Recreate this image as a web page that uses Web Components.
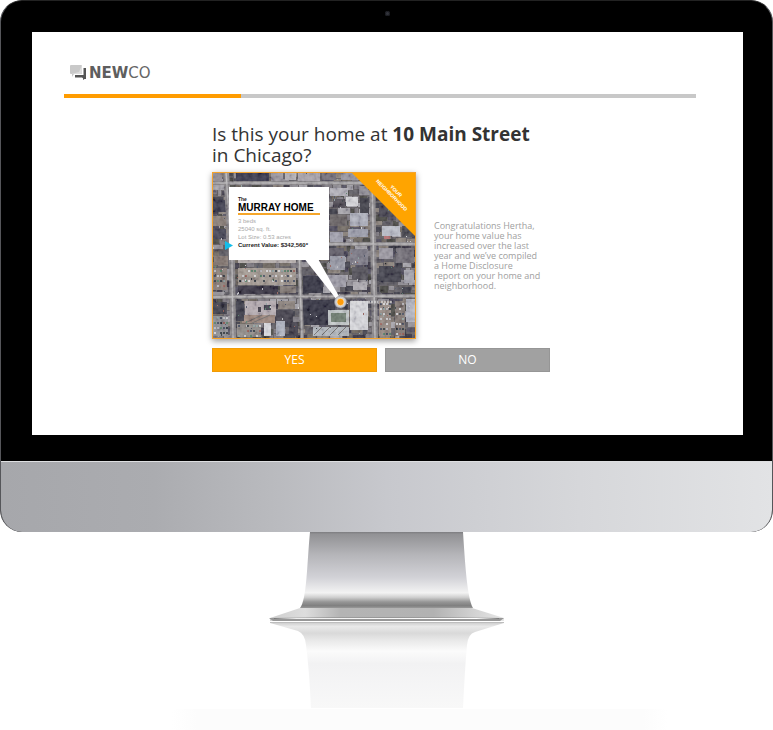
<!DOCTYPE html>
<html lang="en">
<head>
<meta charset="utf-8">
<meta name="viewport" content="width=device-width, initial-scale=1">
<title>NewCo home check</title>
<style>
body { margin: 0; background: #fff; color: #333; font-family: "Open Sans", "Noto Sans", sans-serif; }
</style>
</head>
<body>
<desktop-monitor>
  <app-header></app-header>
  <step-progress value="28"></step-progress>
  <home-question>
    <span slot="title">Is this your home at <b>10 Main Street</b><br>in Chicago?</span>
    <aerial-photo slot="media"></aerial-photo>
    <span slot="note">Congratulations Hertha,<br>your home value has<br>increased over the last<br>year and we’ve compiled<br>a Home Disclosure<br>report on your home and<br>neighborhood.</span>
    <choice-button slot="actions">YES</choice-button>
    <choice-button slot="actions" tone="muted">NO</choice-button>
  </home-question>
</desktop-monitor>

<script>
const define = (name, html, setup) => customElements.define(name, class extends HTMLElement {
  connectedCallback() {
    if (this.shadowRoot) return;
    this.attachShadow({ mode: 'open' }).innerHTML = html;
    if (setup) setup(this, this.shadowRoot);
  }
});

define('monitor-stand', `
<style>:host{display:block} svg{display:block;width:100%;height:auto}</style>
<svg viewBox="0 0 773 198" aria-hidden="true">
  <defs>
    <linearGradient id="neck" x1="0" y1="0" x2="0" y2="1">
      <stop offset="0" stop-color="#7d7d80"/><stop offset=".03" stop-color="#929295"/><stop offset=".3" stop-color="#b5b5b9"/>
      <stop offset=".6" stop-color="#d2d2d7"/><stop offset=".8" stop-color="#f3f3f3"/><stop offset=".86" stop-color="#cfcfcf"/>
      <stop offset=".92" stop-color="#969696"/><stop offset=".97" stop-color="#7f7f7f"/><stop offset="1" stop-color="#999"/>
    </linearGradient>
    <linearGradient id="foot" x1="0" y1="0" x2="1" y2="0">
      <stop offset="0" stop-color="#cfcfcf"/><stop offset=".15" stop-color="#ddd"/><stop offset=".3" stop-color="#b4b4b4"/>
      <stop offset=".7" stop-color="#b2b2b2"/><stop offset=".87" stop-color="#d2d2d2"/><stop offset="1" stop-color="#e6e6e6"/>
    </linearGradient>
    <linearGradient id="edge" x1="0" y1="0" x2="1" y2="0">
      <stop offset="0" stop-color="#777"/><stop offset=".1" stop-color="#eee"/><stop offset=".9" stop-color="#fff"/><stop offset="1" stop-color="#777"/>
    </linearGradient>
    <linearGradient id="mirror" x1="0" y1="0" x2="0" y2="1">
      <stop offset="0" stop-color="#d0d0d0"/><stop offset=".04" stop-color="#e9e9e9"/><stop offset=".12" stop-color="#d9d9d9"/><stop offset=".2" stop-color="#e8e8e8"/>
      <stop offset=".33" stop-color="#fbfbfb"/><stop offset=".48" stop-color="#f2f2f3"/><stop offset="1" stop-color="#f8f8f8"/>
    </linearGradient>
    <linearGradient id="floor" x1="0" y1="0" x2="1" y2="0">
      <stop offset="0" stop-color="#fff"/><stop offset=".05" stop-color="#fcfcfc"/><stop offset=".95" stop-color="#fcfcfc"/><stop offset="1" stop-color="#fff"/>
    </linearGradient>
  </defs>
  <path d="M172 177H668V198H172Z" fill="url(#floor)"/>
  <path d="M270 91H504L475 100Q468 102 467 113Q465 135 463 176H311Q309 135 306 113Q305 102 298 99Z" fill="url(#mirror)"/>
  <path d="M270 86L300 76H472L504 86V89H270Z" fill="url(#foot)"/>
  <path d="M310 0H463C465 30 467 65 473 76H300C307 68 307 30 310 0Z" fill="url(#neck)"/>
  <path d="M269 86Q387 84 504 86L500 89H273Z" fill="#979797"/>
  <path d="M274 86H499V87H274Z" fill="url(#edge)"/>
  <path d="M270 90H504V91H270Z" fill="#bdbdbd"/>
</svg>`);

define('desktop-monitor', `
<style>
:host{display:block}
.case{border-radius:22px;overflow:hidden;background:#000;border:1px solid #55565a;border-bottom:0;border-top-color:#222}
.bezel{padding:0 29px 26px 31px}
.cam{height:31px;display:grid;place-items:center}
.cam span{display:block;width:5px;height:5px;margin-bottom:6px;border-radius:50%;background:#33353d;box-shadow:inset 0 0 0 1px #1b1c21}
.screen{background:#fff;padding:33px 47px 63px 32px}
.chin{height:70px;margin:0 -1px;border-top:1px solid #dedfe1;background:linear-gradient(90deg,#a6a7ab 0%,#abacb0 20%,#b9babe 35%,#c7c8cd 50%,#d6d7da 75%,#e2e3e5 100%)}
</style>
<div class="case">
  <div class="bezel"><div class="cam"><span></span></div><main class="screen"><slot></slot></main></div>
  <div class="chin"></div>
</div>
<monitor-stand></monitor-stand>`);

define('app-header', `
<style>
:host{display:block}
a{display:flex;align-items:center;gap:2px;padding-left:5px;height:16px;color:#666;text-decoration:none;font:400 15px/16px "DejaVu Sans",sans-serif}
b{font-weight:700;color:#5e5e5e}
svg{width:18px;height:16px;flex:none}
</style>
<a href="#" aria-label="NEWCO home">
  <svg viewBox="0 0 18 16" aria-hidden="true">
    <path d="M14.500 3H17V14H15L13 12.500H6V10H14.500Z" fill="#555"/>
    <path d="M14 12V15L17 13Z" fill="#555"/>
    <path d="M2 0H12Q13 0 13 1V8Q13 9 12 9H5L3 12V9H2Q1 9 1 8V1Q1 0 2 0Z" fill="#c9c9c9"/>
    <path d="M13 0L10 7L2 9H12Q13 9 13 8Z" fill="#dedede"/>
  </svg>
  <span><b>NEW</b>CO</span>
</a>`);

define('step-progress', `
<style>
:host{display:block;margin-top:13px}
.track{height:4px;background:#c8c8c8}
.bar{height:100%;background:#ff9c00}
</style>
<div class="track" role="progressbar" aria-label="Progress" aria-valuemin="0" aria-valuemax="100"><div class="bar"></div></div>`,
(el, root) => {
  root.querySelector('.track').setAttribute('aria-valuenow', el.getAttribute('value'));
  root.querySelector('.bar').style.width = el.getAttribute('value') + '%';
});

define('home-question', `
<style>
:host{display:block;max-width:338px;margin:26px auto 0;padding-left:2px}
h1{margin:0;font-size:19px;line-height:21px;font-weight:400;color:#333}
.row{display:flex;align-items:center;gap:18px;margin-top:6px}
p{flex:1;margin:0;font-size:9px;line-height:10px;color:#a0a0a0}
.actions{display:grid;grid-template-columns:1fr 1fr;gap:8px;margin-top:9px}
</style>
<h1><slot name="title"></slot></h1>
<div class="row"><slot name="media"></slot><p><slot name="note"></slot></p></div>
<div class="actions"><slot name="actions"></slot></div>`);

define('choice-button', `
<style>
:host{display:block}
button{display:block;width:100%;height:24px;padding:0;border:1px solid #f09b05;background:#ffa400;color:#fff;font:400 12px/22px "Open Sans",sans-serif;cursor:pointer}
:host([tone=muted]) button{background:#a1a1a1;border-color:#969696}
</style>
<button type="button"><slot></slot></button>`);

define('aerial-photo', `
<style>
:host{display:block;flex:none;position:relative;width:204px;box-shadow:0 2px 6px #0006;font-family:"Liberation Sans",Arial,sans-serif}
svg{display:block;width:100%;height:auto}
.card{position:absolute;left:17px;top:15px;width:91px;height:65px;padding:8px 0 0 9px;color:#222;font-size:6px;line-height:8px;background:#fff}
.card div{color:#aaa}
.the{font-size:5px;line-height:8px;font-weight:700;display:block}
h2{margin:0;width:82px;font-size:10px;line-height:10px;border-bottom:2px solid #f5a62b;color:#000;margin-bottom:2px}
.card strong{display:block}
.marker{position:absolute;left:13px;top:69px;width:8px;height:9px;background:#14bdea;clip-path:polygon(0 0,100% 50%,0 100%)}
</style>
<svg viewBox="0 0 204 167" role="img" aria-label="Aerial view of the neighborhood">
  <defs>
    <filter id="soft" x="0" y="0" width="1" height="1"><feGaussianBlur stdDeviation=".6"/></filter>
    <filter id="grain" x="0" y="0" width="1" height="1">
      <feTurbulence type="fractalNoise" baseFrequency=".22" numOctaves="2" seed="4"/>
      <feColorMatrix values="1.4 0 0 0 -.3  1.4 0 0 0 -.31  1.4 0 0 0 -.27  0 0 0 0 .2"/>
    </filter>
  </defs>
  <rect width="204" height="167" fill="#575356"/>
  <g filter="url(#soft)">
    <g id="houses"></g>
    <g id="roofs"></g>
    <g id="cars"></g>
    <g fill="none" stroke="#858284" stroke-width="6">
      <path d="M14 0L20 90L21 167M160 0L163 167"/>
      <path stroke-width="4" d="M87 75L90 167M0 11H204M108 72H204M0 125L204 124"/>
      <path stroke="#b8b6b7" stroke-width="1.500" d="M14 0L20 90L21 167M87 75L90 167M160 0L163 167M0 11H204M108 72H204M0 125L204 124"/>
    </g>
  </g>
  <rect width="204" height="167" filter="url(#grain)"/>
  <path fill="#fff" d="M91 85L105 85L129 128L125 128Z"/>
  <circle cx="128.500" cy="130" r="6" fill="#c9cbd1" stroke="#8d8d94" stroke-width=".6"/>
  <circle cx="128.500" cy="130" r="3.700" fill="#ff9c0a" stroke="#f5ead6" stroke-width=".8"/>
  <path d="M139 130H153M156 130H166M169 130H181" stroke="#dedede" stroke-width="2.500" stroke-dasharray="2 1" opacity=".65"/>
  <path fill="#ffa400" d="M139 0H204V65Z"/>
  <g transform="translate(180 23) rotate(45)" fill="#fff" font-size="5" font-weight="700" text-anchor="middle">
    <text y="-4">YOUR</text><text y="2">NEIGHBORHOOD</text>
  </g>
  <rect x=".5" y=".5" width="203" height="166" fill="none" stroke="#f5a32c"/>
</svg>
<div class="card">
  <span class="the">The</span><h2>MURRAY HOME</h2>
  <div>3 beds</div><div>25040 sq. ft.</div><div>Lot Size: 0.53 acres</div>
  <strong>Current Value: $342,560*</strong>
</div>
<span class="marker"></span>`,
(el, root) => {
  let seed = 29;
  const rnd = () => (seed = (seed * 16807) % 2147483647) / 2147483647;
  const pick = list => list[Math.floor(rnd() * list.length)];
  const rect = (x, y, w, h, c) => `<rect x="${x}" y="${y}" width="${w}" height="${h}" fill="${c}"/>`;
  // Small mixed lots under the named buildings
  let s = '';
  const tones = ['#33323e', '#454352', '#77737a', '#8f8c92', '#a5a3a9', '#6b6259', '#857b73', '#3a3b36', '#55525a', '#2d2c38'];
  for (let y = 0; y < 167; y += 6) {
    for (let x = 0; x < 204;) {
      const w = 4 + Math.floor(rnd() * 10);
      s += rect(x, y + Math.floor(rnd() * 2), w - 1, 4 + Math.floor(rnd() * 4), pick(tones));
      x += w;
    }
  }
  root.getElementById('houses').innerHTML = s;
  const roofs = [
    [24,1,33,8,'#2b2b40'],[59,1,12,8,'#99959c'],[73,1,11,7,'#b5b2b6'],[86,1,22,8,'#aaa5ac'],[129,1,20,7,'#92909b'],[110,1,14,7,'#6c6872'],
    [1,1,9,8,'#8f8a90'],[1,28,14,12,'#2d2d40'],[1,44,14,10,'#857970'],[1,57,13,10,'#393948'],[2,84,14,9,'#7b6e66'],
    [118,16,18,8,'#b3b1b9'],[121,27,12,9,'#44414a'],[134,25,12,9,'#dcdcdf'],[148,26,9,16,'#32303a'],[138,41,18,13,'#aeb1bd'],
    [118,43,17,11,'#625c5c'],[136,57,20,8,'#9a9caa'],[118,60,13,10,'#a0a0ac'],[147,14,9,9,'#8f8d94'],
    [167,14,14,14,'#8a8793'],[167,32,14,13,'#3d3b46'],[184,38,10,12,'#6a6569'],[170,54,18,10,'#bcc0ca'],[190,54,12,11,'#404047'],[172,64,6,3,'#b06464'],
    [112,76,20,12,'#55515c'],[118,84,15,14,'#989aa6'],[138,77,18,16,'#777581'],[140,95,16,13,'#484650'],[167,76,14,11,'#98959e'],
    [167,94,22,16,'#35343f'],[184,76,18,15,'#6c6870'],[192,98,10,13,'#a3a3ad'],[112,103,22,12,'#9b99a4'],[141,110,14,8,'#b1aeb3'],
    [26,84,58,7,'#b7afac'],[26,96,58,17,'#a1978d'],[26,114,40,8,'#292836'],[68,114,16,7,'#7b726c'],
    [91,104,20,17,'#252534'],[91,128,32,25,'#262534'],[33,129,31,14,'#b7adb1'],[30,143,33,8,'#9a8275'],[24,129,8,20,'#2e2d3a'],
    [64,138,17,13,'#373541'],[66,129,17,8,'#8a8078'],[52,151,7,13,'#dedfe3'],[64,149,9,15,'#aeb3c0'],[77,150,9,14,'#34333e'],
    [25,152,24,13,'#8d8883'],[116,138,21,15,'#c3c9c9'],[119,141,15,9,'#69796b'],[101,155,36,9,'#b3b9be'],[138,129,18,29,'#dcdde0'],
    [167,129,12,35,'#92857c'],[183,129,10,35,'#7e736d'],[194,127,9,23,'#b3b6c2'],[1,96,14,22,'#85786f'],[1,130,14,12,'#33323c'],[1,144,15,20,'#8a8b8f']
  ];
  root.getElementById('roofs').innerHTML = roofs.map(r => rect(...r)).join('') +
    '<path d="M33 151L50 143M40 151L58 143M102 163L110 155M110 163L118 155M118 163L126 155M126 163L134 155" stroke="#6b6865"/>' +
    rect(46, 135, 3, 5, '#2d2c35') + rect(52, 133, 7, 5, '#393844');
  // Parked cars, in rows
  s = '';
  const paint = ['#d0d0d3', '#2c3038', '#8fa2a0', '#95584f', '#4f7b62', '#bcbcc0', '#3c4558', '#dcdcdc'];
  const lot = (x0, y0, x1, y1) => {
    for (let y = y0; y < y1; y += 5) for (let x = x0; x < x1; x += 3) if (rnd() > .25) s += rect(x, y, 2, 2, pick(paint));
  };
  lot(27, 98, 83, 112); lot(168, 131, 179, 163); lot(184, 131, 193, 163); lot(2, 145, 15, 163); lot(26, 153, 48, 164); lot(2, 98, 14, 117);
  for (let i = 0; i < 160; i++) s += rect(Math.floor(rnd() * 202), Math.floor(rnd() * 165), 1, 1 + Math.floor(rnd() * 2), pick(paint));
  root.getElementById('cars').innerHTML = s;
});
</script>
</body>
</html>
